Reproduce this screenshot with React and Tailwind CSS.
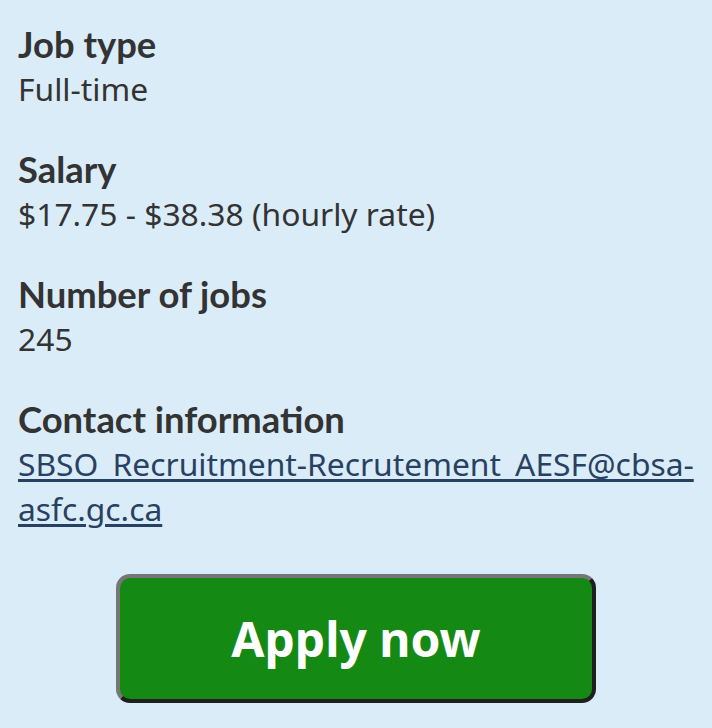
export default function App() {
  const items = [
    { label: "Job type", value: "Full-time" },
    { label: "Salary", value: "$17.75 - $38.38 (hourly rate)" },
    { label: "Number of jobs", value: "245" },
  ];

  return (
    <div className="min-h-screen bg-[#dbecf9] pl-[18px] pr-[8px] pt-[23px] text-[#333333]">
      <dl className="flex flex-col gap-[37px]">
        {items.map((item) => (
          <div key={item.label}>
            <dt className="font-['Lato',sans-serif] font-bold text-[36.4px] leading-[43px]">
              {item.label}
            </dt>
            <dd className="font-['Noto_Sans',sans-serif] text-[31.8px] leading-[45px]">
              {item.value}
            </dd>
          </div>
        ))}
        <div>
          <dt className="font-['Lato',sans-serif] font-bold text-[36.4px] leading-[43px]">
            Contact information
          </dt>
          <dd className="font-['Noto_Sans',sans-serif] text-[31.8px] leading-[45px]">
            <a
              href="#"
              className="text-[#284162] underline decoration-[3px] underline-offset-[3px]"
            >
              SBSO_Recruitment-Recrutement_AESF@cbsa-asfc.gc.ca
            </a>
          </dd>
        </div>
      </dl>

      <div className="flex justify-center pt-[43px] pr-[10px]">
        <button
          type="button"
          className="w-[480px] h-[129px] rounded-[14px] border-4 border-t-[#767676] border-l-[#767676] border-b-[#1f1f1f] border-r-[#1f1f1f] bg-[#148914] text-white font-['Noto_Sans',sans-serif] font-bold text-[48px]"
        >
          Apply now
        </button>
      </div>
    </div>
  );
}
